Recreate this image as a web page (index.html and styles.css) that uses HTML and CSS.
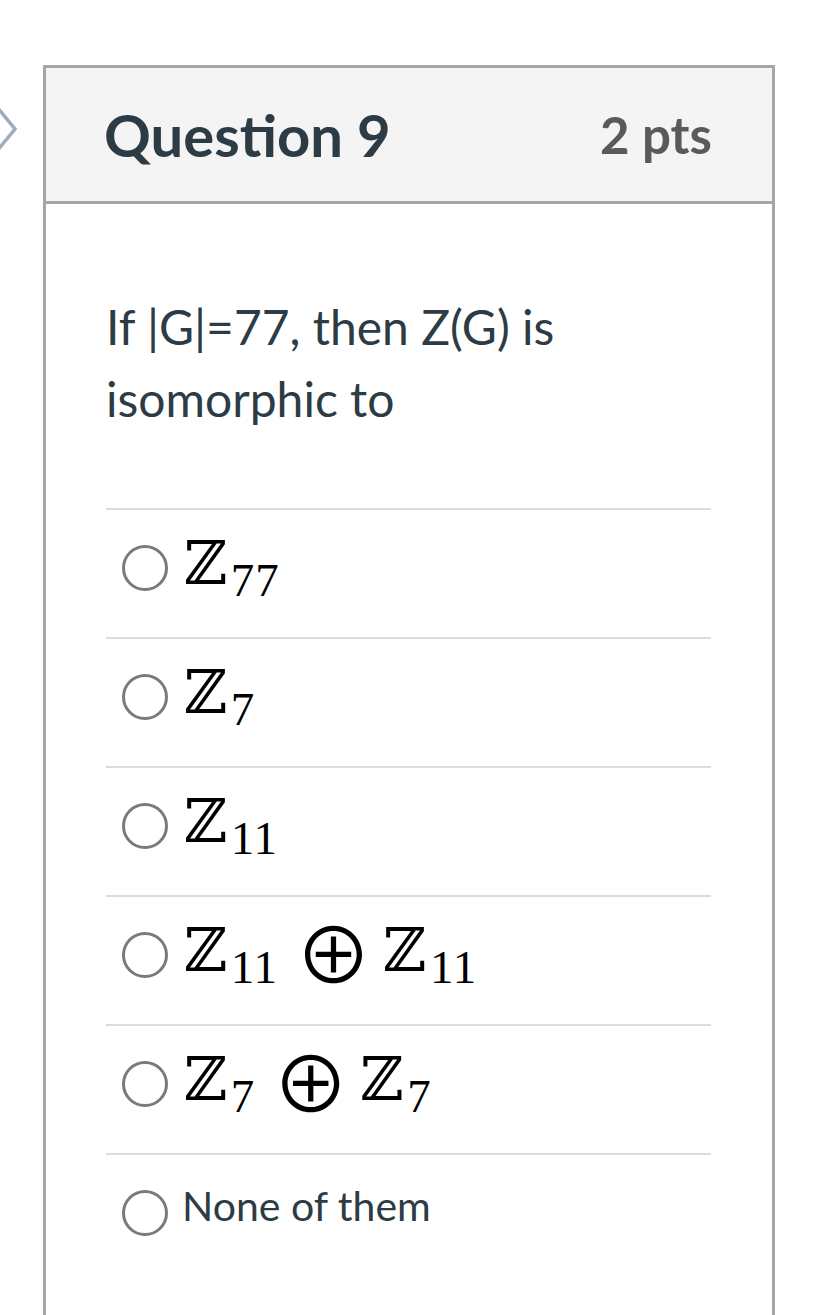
FILE: index.html
```html
<!DOCTYPE html>
<html lang="en">
<head>
<meta charset="utf-8">
<title>Question 9</title>
<link rel="stylesheet" href="styles.css">
</head>
<body>
<div class="page">
  <svg class="nav-arrow" width="20" height="52" viewBox="0 0 20 52" aria-hidden="true">
    <polyline points="-4,2 15,25 -4,48" fill="none" stroke="#9cadbf" stroke-width="3.5"/>
  </svg>
  <div class="question">
    <div class="q-header">
      <h2 class="q-title">Question 9</h2>
      <span class="q-points">2 pts</span>
    </div>
    <div class="q-body">
      <div class="q-text">If |G|=77, then Z(G) is isomorphic to</div>
      <div class="answers">
        <label class="answer">
          <span class="radio"></span>
          <span class="math"><span class="bb">ℤ</span><sub class="sub">77</sub></span>
        </label>
        <label class="answer">
          <span class="radio"></span>
          <span class="math"><span class="bb">ℤ</span><sub class="sub">7</sub></span>
        </label>
        <label class="answer">
          <span class="radio"></span>
          <span class="math"><span class="bb">ℤ</span><sub class="sub">11</sub></span>
        </label>
        <label class="answer">
          <span class="radio"></span>
          <span class="math"><span class="bb">ℤ</span><sub class="sub">11</sub><span class="op">⊕</span><span class="bb">ℤ</span><sub class="sub">11</sub></span>
        </label>
        <label class="answer">
          <span class="radio"></span>
          <span class="math"><span class="bb">ℤ</span><sub class="sub">7</sub><span class="op">⊕</span><span class="bb">ℤ</span><sub class="sub">7</sub></span>
        </label>
        <label class="answer">
          <span class="radio"></span>
          <span class="plain">None of them</span>
        </label>
      </div>
    </div>
  </div>
</div>
</body>
</html>
```

FILE: styles.css
```css
html, body {
  margin: 0;
  padding: 0;
  background: #ffffff;
}

.page {
  position: relative;
  height: 1315px;
  overflow: hidden;
  font-family: Lato, "Liberation Sans", sans-serif;
  color: #2d3b45;
}

.nav-arrow {
  position: absolute;
  left: 0;
  top: 104px;
}

.question {
  box-sizing: border-box;
  width: 732px;
  min-height: 1260px;
  margin: 65px 0 0 43px;
  border: 3px solid #a6a6a6;
  border-bottom: 0;
}

.q-header {
  height: 133px;
  background: #f4f4f4;
  border-bottom: 3px solid #a6a6a6;
  display: flex;
  align-items: center;
  justify-content: space-between;
  padding: 0 60px 0 58px;
}

.q-title {
  margin: 0;
  font-size: 58px;
  font-weight: 700;
  color: #2d3b45;
  line-height: 1.2;
}

.q-points {
  font-size: 51px;
  font-weight: 700;
  color: #5a5a5a;
  line-height: 1.2;
}

.q-body {
  padding: 87px 61px 0 60px;
}

.q-text {
  font-size: 48px;
  line-height: 72px;
  color: #2d3b45;
  margin-bottom: 73px;
}

.answer {
  display: flex;
  align-items: flex-start;
  box-sizing: border-box;
  height: 129px;
  border-top: 2px solid #dcdcdc;
  padding-top: 35px;
}

.radio {
  flex: none;
  box-sizing: border-box;
  width: 46px;
  height: 46px;
  margin-left: 16px;
  border: 3px solid #7a7a7a;
  border-radius: 50%;
  background: #fff;
}

.math {
  margin-left: 16px;
  margin-top: -5px;
  line-height: 46px;
  color: #000;
  white-space: nowrap;
  font-family: "Liberation Serif", "DejaVu Serif", serif;
}

.bb {
  font-family: "DejaVu Serif", serif;
  font-size: 60px;
}

.sub {
  font-family: "Liberation Serif", serif;
  font-size: 47px;
  letter-spacing: 1px;
  vertical-align: -12px;
  line-height: 0;
  margin-left: 3px;
}

.op {
  font-family: "Noto Sans CJK JP", "DejaVu Sans", sans-serif;
  font-size: 77px;
  line-height: 0;
  vertical-align: -13px;
  margin: 0 11px 0 17px;
}

.plain {
  margin-left: 14px;
  font-size: 41px;
  line-height: 46px;
  margin-top: -7px;
  color: #2d3b45;
}
```
